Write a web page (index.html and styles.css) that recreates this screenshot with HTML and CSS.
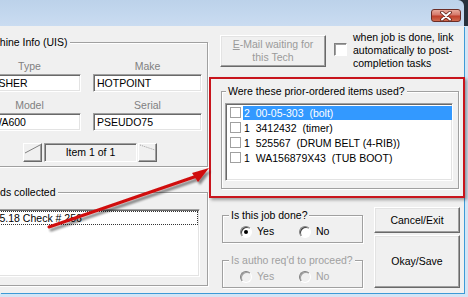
FILE: index.html
```html
<!DOCTYPE html>
<html>
<head>
<meta charset="utf-8">
<title>Job</title>
<link rel="stylesheet" href="styles.css">
</head>
<body>
<div class="frame">
  <div class="titlebar">
    <div class="close">
      <svg width="14" height="10" viewBox="0 0 14 10"><path d="M3 1.5 L11 8.5 M11 1.5 L3 8.5" stroke="#5a1d16" stroke-width="3.6" stroke-linecap="round"/><path d="M3 1.5 L11 8.5 M11 1.5 L3 8.5" stroke="#fff" stroke-width="2" stroke-linecap="round"/></svg>
    </div>
  </div>
  <div class="client">
    <div class="left">
      <fieldset class="group machine">
        <legend>Machine Info (UIS)</legend>
        <div class="fields">
          <div class="lbl">Type</div><div class="lbl">Make</div>
          <div class="tb">WASHER</div><div class="tb">HOTPOINT</div>
          <div class="lbl second">Model</div><div class="lbl second">Serial</div>
          <div class="tb">WWA600</div><div class="tb">PSEUDO75</div>
        </div>
        <div class="nav">
          <div class="navbtn"><svg width="17" height="17" viewBox="0 0 17 17"><path d="M1 9 L16 1" stroke="#808080" stroke-width="1"/></svg></div>
          <div class="navmid">Item 1 of 1</div>
          <div class="navbtn"><svg width="17" height="17" viewBox="0 0 17 17"><path d="M1 1 L16 6" stroke="#a0a0a0" stroke-width="1" stroke-dasharray="1 1"/></svg></div>
        </div>
      </fieldset>
      <fieldset class="group funds">
        <legend>Funds collected</legend>
        <div class="listbox funds-list">
          <div class="frow">$125.18 Check # 256</div>
        </div>
      </fieldset>
    </div>
    <div class="right">
      <div class="top">
        <div class="btn btn-email"><span><u>E</u>-Mail waiting for<br>this Tech</span></div>
        <div class="chk big"></div>
        <div class="chk-text">when job is done, link<br>automatically to post-<br>completion tasks</div>
      </div>
      <div class="redbox">
        <fieldset class="group items">
          <legend>Were these prior-ordered items used?</legend>
          <div class="listbox items-list">
            <div class="irow"><span class="chk small"></span><span class="itxt sel">2  00-05-303  (bolt)</span></div>
            <div class="irow"><span class="chk small"></span><span class="itxt">1  3412432  (timer)</span></div>
            <div class="irow"><span class="chk small"></span><span class="itxt">1  525567  (DRUM BELT (4-RIB))</span></div>
            <div class="irow"><span class="chk small"></span><span class="itxt">1  WA156879X43  (TUB BOOT)</span></div>
          </div>
        </fieldset>
      </div>
      <div class="bottom">
        <div class="questions">
          <fieldset class="group q">
            <legend>Is this job done?</legend>
            <div class="radios">
              <div class="ritem"><span class="radio on"></span>Yes</div>
              <div class="ritem"><span class="radio"></span>No</div>
            </div>
          </fieldset>
          <fieldset class="group q q2 disabled">
            <legend>Is autho req'd to proceed?</legend>
            <div class="radios">
              <div class="ritem"><span class="radio"></span>Yes</div>
              <div class="ritem"><span class="radio"></span>No</div>
            </div>
          </fieldset>
        </div>
        <div class="buttons">
          <div class="btn btn-cancel">Cancel/Exit</div>
          <div class="btn btn-ok">Okay/Save</div>
        </div>
      </div>
    </div>
  </div>
  <svg class="arrow" width="468" height="297" viewBox="0 0 468 297">
    <defs>
      <filter id="sh" x="-20%" y="-20%" width="140%" height="140%">
        <feGaussianBlur in="SourceAlpha" stdDeviation="1.2"/>
        <feOffset dx="2" dy="3" result="b"/>
        <feComponentTransfer><feFuncA type="linear" slope="0.45"/></feComponentTransfer>
        <feMerge><feMergeNode/><feMergeNode in="SourceGraphic"/></feMerge>
      </filter>
    </defs>
    <g filter="url(#sh)">
      <path d="M49 227 L197 176" stroke="#d00c0c" stroke-width="3" stroke-linecap="round"/>
      <path d="M209 168 L192 173 L198 182 Z" fill="#d00c0c"/>
    </g>
  </svg>
</div>
</body>
</html>
```

FILE: styles.css
```css
* { box-sizing: border-box; }
html, body { margin: 0; padding: 0; }
body {
  width: 468px; height: 297px; overflow: hidden; background: #fff;
  font-family: "Liberation Sans", Arial, sans-serif; font-size: 10.5px; line-height: 13px; color: #000;
}
.frame {
  position: relative; width: 468px; height: 297px; overflow: hidden;
  background: linear-gradient(#27313c 0, #27313c 26px, #d4e5f5 26px);
}
.titlebar {
  width: 464px; height: 26px; border-radius: 0 6px 0 0;
  background: linear-gradient(#bcd2ea, #cadcf1);
  display: flex; justify-content: flex-end; align-items: flex-start; padding: 9px 3px 0 0;
}
.close {
  width: 30px; height: 13px; border: 1px solid #6b2d26; border-radius: 3px;
  background: linear-gradient(#e8a99b 0%, #d6786a 45%, #bf3f2b 55%, #cf6a4f 100%);
  display: flex; align-items: center; justify-content: center;
}
.client {
  display: flex; align-items: flex-start; width: 464px; height: 267px; background: #f0f0f0;
  box-shadow: 1px 1px 0 #3d9ad6;
}
.left { margin-left: -24px; width: 232px; flex: none; padding-top: 10px; }
.group {
  border: 1px solid #a0a0a0; box-shadow: inset 1px 1px 0 #fff, 1px 1px 0 #fff;
  margin: 0; min-width: 0;
}
.group legend { padding: 0 2px; line-height: 13px; background: #f0f0f0; white-space: nowrap; }
.machine { padding: 11px 5px 4px 1px; }
.fields { display: grid; grid-template-columns: 103px 109px; column-gap: 12px; }
.lbl { color: #808080; text-align: center; height: 13px; margin-bottom: 1px; }
.lbl.second { margin-top: 7px; }
.tb {
  height: 18px; background: #fff; border: 1px solid; border-color: #a0a0a0 #fff #fff #a0a0a0;
  box-shadow: inset 1px 1px 0 #696969, inset -1px -1px 0 #e3e3e3;
  padding: 2px 0 0 3px; white-space: nowrap; overflow: hidden;
}
.nav { display: flex; justify-content: center; margin-top: 12px; }
.navbtn {
  width: 19px; height: 19px; border: 1px solid; border-color: #fff #696969 #696969 #fff;
  box-shadow: inset -1px -1px 0 #a0a0a0; display: flex;
}
.navmid {
  width: 93px; height: 19px; margin: 0 1px 0 2px; border: 1px solid; border-color: #a0a0a0 #fff #fff #a0a0a0;
  box-shadow: inset 1px 1px 0 #696969; text-align: center; line-height: 17px;
}
.funds { margin-top: 19px; padding: 10px 7px 8px 3px; }
.listbox {
  background: #fff; border: 1px solid; border-color: #a0a0a0 #fff #fff #a0a0a0;
  box-shadow: inset 1px 1px 0 #696969, inset -1px -1px 0 #e3e3e3; padding: 1px;
}
.funds-list { height: 68px; }
.frow { border: 1px dotted #333; height: 14px; line-height: 12px; padding-left: 2px; text-indent: -3px; white-space: nowrap; }
.right { margin-left: 1px; width: 256px; flex: none; }
.top { display: flex; align-items: flex-start; margin-top: 5px; padding-left: 11px; }
.btn {
  background: #f0f0f0; border: 1px solid; border-color: #fff #696969 #696969 #fff;
  box-shadow: inset -1px -1px 0 #a0a0a0, inset 1px 1px 0 #e3e3e3;
  display: flex; align-items: center; justify-content: center; text-align: center;
}
.btn-email { width: 106px; height: 32px; margin-top: 4px; color: #9a9a9a; flex: none; }
.chk {
  display: inline-block; background: #fff; border: 1px solid; border-color: #808080 #fff #fff #808080;
  box-shadow: inset 1px 1px 0 #a0a0a0;
}
.chk.big { width: 13px; height: 13px; margin: 12px 0 0 8px; flex: none; }
.chk-text { margin-left: 6px; white-space: nowrap; }
.redbox {
  margin-top: 7px; width: 256px; height: 121px; border: 2px solid #c8141c;
  box-shadow: 2px 2px 3px rgba(0,0,0,0.35); padding: 6px 0 0 10px;
}
.items { width: 238px; padding: 5px 5px 7px 3px; }
.items legend { margin-left: 1px; }
.items-list { height: 78px; padding: 1px 0 0 4px; }
.irow { height: 15px; display: flex; align-items: center; }
.chk.small { width: 11px; height: 11px; border-color: #a0a0a0; box-shadow: none; flex: none; }
.itxt { white-space: pre; margin-left: 2px; padding: 0 1px; line-height: 14px; flex: 1; }
.itxt.sel { background: #3399ff; color: #fff; }
.bottom { display: flex; margin-top: 9px; padding-left: 13px; }
.questions { width: 141px; flex: none; padding-top: 2px; }
.q { padding: 3px 0 4px 0; }
.q legend { margin-left: 6px; }
.q2 { margin-top: 11px; }
.radios { display: flex; padding-left: 17px; }
.ritem { width: 59px; display: flex; align-items: center; height: 13px; }
.radio {
  width: 12px; height: 12px; border-radius: 50%; margin-right: 5px; background: #fff; position: relative;
  border: 1px solid; border-color: #808080 #fff #fff #808080; box-shadow: inset 1px 1px 0 #404040;
}
.radio.on::after {
  content: ""; position: absolute; left: 3px; top: 3px; width: 4px; height: 4px; border-radius: 50%; background: #000;
}
.disabled, .disabled legend { color: #a0a0a0; }
.disabled .radio { background: #f0f0f0; box-shadow: inset 1px 1px 0 #a0a0a0; }
.buttons { margin-left: 11px; display: flex; flex-direction: column; gap: 2px; }
.btn-cancel { width: 86px; height: 26px; }
.btn-ok { width: 86px; height: 53px; }
.arrow { position: absolute; left: 0; top: 0; pointer-events: none; }
```
